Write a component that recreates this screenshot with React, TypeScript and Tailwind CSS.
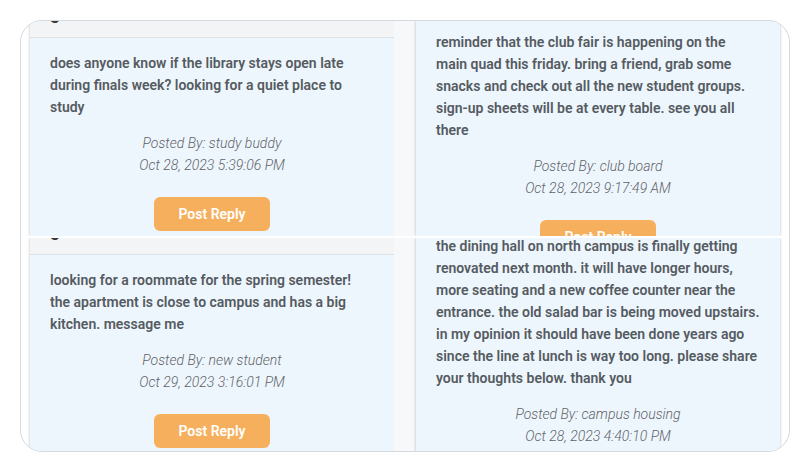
import React from 'react';

type Post = {
  body: string;
  author: string;
  date: string;
};

const font = { fontFamily: 'Roboto, "Open Sans", sans-serif' };

function PostBody({ post, showButton = true }: { post: Post; showButton?: boolean }) {
  return (
    <div className="px-5">
      <p className="text-[14px] leading-[22px] font-semibold text-[#555b61]">{post.body}</p>
      <div className="mt-[14px] text-center text-[14px] leading-[22px] italic font-light text-[#5f6368]">
        <div>Posted By: {post.author}</div>
        <div>{post.date}</div>
      </div>
      {showButton && (
        <div className="mt-[21px] flex justify-center">
          <button className="w-[116px] h-[34px] rounded-[6px] bg-[#f6af5c] text-white text-[14px] font-semibold">
            Post Reply
          </button>
        </div>
      )}
    </div>
  );
}

function Panel({ children, header }: { children: React.ReactNode; header?: boolean }) {
  return (
    <div className="w-[364px] h-full bg-[#eef6fd] shadow-[0_0_3px_rgba(0,0,0,0.25)] overflow-hidden">
      {header && (
        <div className="h-[17px] bg-[#f2f4f6] border-b border-[#dde2e6] overflow-hidden">
          <div className="-mt-[20px] pl-5 text-[18px] leading-[24px] font-semibold text-[#333]">
            general discussion
          </div>
        </div>
      )}
      {children}
    </div>
  );
}

function Half({ left, right, rightOffset }: { left: Post; right: Post; rightOffset: string }) {
  return (
    <div className="h-[215px] flex overflow-hidden">
      <div className="w-[9px]" />
      <Panel header>
        <div className="pt-[14px]">
          <PostBody post={left} />
        </div>
      </Panel>
      <div className="w-[22px] bg-[#f7f8f9]" />
      <Panel>
        <div className={rightOffset}>
          <PostBody post={right} />
        </div>
      </Panel>
    </div>
  );
}

export default function App() {
  const posts: Post[] = [
    {
      body: 'does anyone know if the library stays open late during finals week? looking for a quiet place to study',
      author: 'study buddy',
      date: 'Oct 28, 2023 5:39:06 PM',
    },
    {
      body: 'reminder that the club fair is happening on the main quad this friday. bring a friend, grab some snacks and check out all the new student groups. sign-up sheets will be at every table. see you all there',
      author: 'club board',
      date: 'Oct 28, 2023 9:17:49 AM',
    },
    {
      body: 'looking for a roommate for the spring semester! the apartment is close to campus and has a big kitchen. message me',
      author: 'new student',
      date: 'Oct 29, 2023 3:16:01 PM',
    },
    {
      body: 'the dining hall on north campus is finally getting renovated next month. it will have longer hours, more seating and a new coffee counter near the entrance. the old salad bar is being moved upstairs. in my opinion it should have been done years ago since the line at lunch is way too long. please share your thoughts below. thank you',
      author: 'campus housing',
      date: 'Oct 28, 2023 4:40:10 PM',
    },
  ];

  return (
    <div className="w-[802px] h-[473px] bg-white pt-[20px] pl-[20px]" style={font}>
      <div className="w-[770px] h-[432px] rounded-[22px] border border-[#d3d9df] overflow-hidden bg-white flex flex-col">
        <Half left={posts[0]} right={posts[1]} rightOffset="pt-[10px]" />
        <div className="h-[2px] bg-white" />
        <div className="h-[213px] overflow-hidden">
          <Half left={posts[2]} right={posts[3]} rightOffset="-mt-[3px]" />
        </div>
      </div>
    </div>
  );
}
